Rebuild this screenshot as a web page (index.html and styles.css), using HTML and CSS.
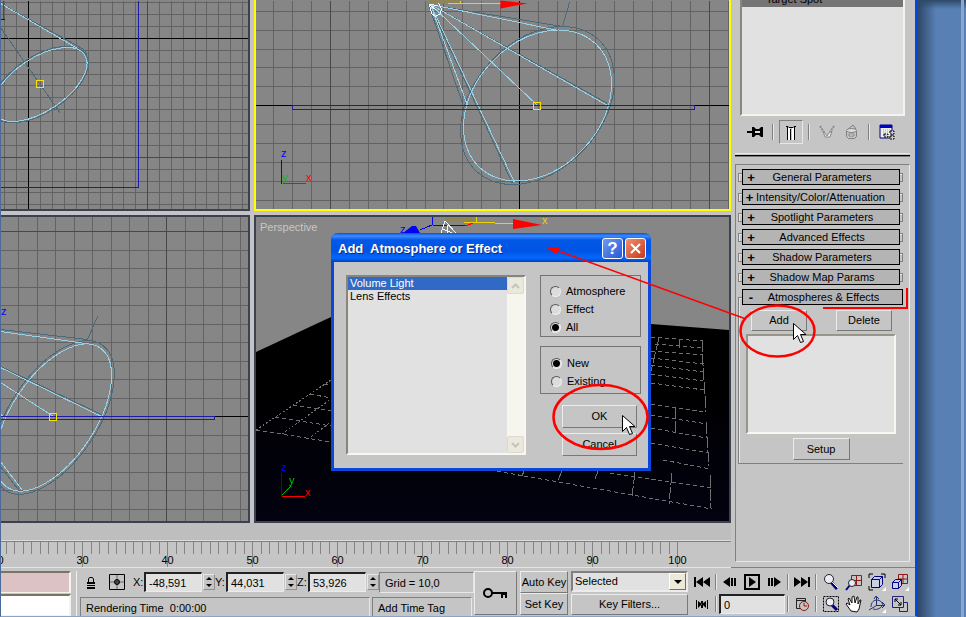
FILE: index.html
```
<!DOCTYPE html>
<html lang="en">
<head>
    <meta charset="UTF-8">
    <meta name="viewport" content="width=device-width, initial-scale=1.0">
    <title>Add Atmosphere or Effect</title>
    <link rel="stylesheet" href="styles.css">
</head>
<body>
<div class="desktop">
    <main class="app">
        <div class="upper">
            <div class="stage">
                <div class="viewports">
                    <!-- Top view -->
                    <div class="viewport first">
                        <svg viewBox="1 0 247 209" preserveAspectRatio="xMinYMin slice">
                            <g transform="translate(.5 .5)" fill="none">
                                <path class="grid" d="M4 0V209M16 0V209M40 0V209M52 0V209M64 0V209M76 0V209M88 0V209M100 0V209M112 0V209M123 0V209M135 0V209M159 0V209M171 0V209M183 0V209M195 0V209M206 0V209M218 0V209M230 0V209M242 0V209M0 2H248M0 14H248M0 26H248M0 50H248M0 62H248M0 74H248M0 85H248M0 97H248M0 109H248M0 121H248M0 133H248M0 145H248M0 169H248M0 181H248M0 192H248M0 204H248"/>
                                <path class="grid-major" d="M147 0V209M0 157H248"/>
                                <path class="axis" d="M28 0V209M0 38H248"/>
                                <path class="plane" d="M138 0V187H0"/>
                                <path class="falloff" d="M0 3L80 47Q86 50 86 56M0 27L60 113"/>
                                <ellipse class="falloff" cx="39.5" cy="84" rx="55" ry="28" transform="rotate(-33.6 39.5 84)"/>
                                <path class="cone" d="M0 3L77 48"/>
                                <ellipse class="cone" cx="39.5" cy="84" rx="53.6" ry="26.5" transform="rotate(-33.6 39.5 84)"/>
                                <path class="target" d="M36 80h7v7h-7z"/>
                                <path class="red-line" d="M3 0V19"/>
                                <path class="blue-line" d="M0 19H4"/>
                            </g>
                        </svg>
                    </div>
                    <!-- Front view -->
                    <div class="viewport active">
                        <svg viewBox="256 0 473 209" preserveAspectRatio="xMinYMin slice">
                            <g transform="translate(.5 .5)" fill="none">
                                <path class="grid" d="M273 0V209M292 0V209M311 0V209M349 0V209M368 0V209M387 0V209M406 0V209M425 0V209M443 0V209M462 0V209M481 0V209M500 0V209M538 0V209M557 0V209M576 0V209M595 0V209M614 0V209M633 0V209M652 0V209M671 0V209M690 0V209M728 0V209M255 11H730M255 30H730M255 49H730M255 67H730M255 86H730M255 124H730M255 143H730M255 162H730M255 181H730M255 200H730"/>
                                <path class="grid-major" d="M330 0V209M709 0V209"/>
                                <path class="axis" d="M519 0V209M255 105H292M694 105H730"/>
                                <path class="falloff" d="M428 4L562 26L569 2M430 4L607 103M428 4L462 103M429 4L512 183"/>
                                <ellipse class="falloff" cx="537" cy="105" rx="89.8" ry="64.1" transform="rotate(-47.3 537 105)"/>
                                <path class="cone" d="M430 4L558 30M430 4L607 105M430 4L467 105M430 4L514 182"/>
                                <path class="cone thin" d="M430 4L537 105"/>
                                <ellipse class="cone" cx="537" cy="105" rx="84.8" ry="63.1" transform="rotate(-47 537 105)"/>
                                <path class="plane" d="M292 105H694V109H292z"/>
                                <path fill="#8f8559" d="M428 -1H460V3H428z"/>
                                <path class="yellow-line" d="M447 3H500M460 0V3"/>
                                <path fill="#f00" d="M500 0L527 3L500 8z"/>
                                <path class="white-line" d="M429 4l8 1-6 1 4 3-6-5 2 9 4 3 5-3 1-5-3-5"/>
                                <path class="target" d="M533 102h7v7h-7z"/>
                                <path class="blue-line" d="M281 159V183"/>
                                <path class="red-line" d="M282 183H305"/>
                            </g>
                            <text x="281" y="157" class="blue">z</text>
                            <text x="282" y="181" class="green">y</text>
                            <text x="306" y="181" class="red">x</text>
                        </svg>
                    </div>
                    <!-- Left view -->
                    <div class="viewport second">
                        <svg viewBox="1 217 247 304" preserveAspectRatio="xMinYMin slice">
                            <g transform="translate(.5 .5)" fill="none">
                                <path class="grid" d="M18 216V521M37 216V521M55 216V521M74 216V521M92 216V521M111 216V521M129 216V521M148 216V521M185 216V521M203 216V521M222 216V521M240 216V521M0 250H248M0 268H248M0 287H248M0 305H248M0 324H248M0 342H248M0 361H248M0 379H248M0 398H248M0 435H248M0 453H248M0 472H248M0 490H248M0 509H248"/>
                                <path class="grid-major" d="M166 216V521M0 231H248"/>
                                <path class="axis" d="M214 416H248"/>
                                <path class="falloff" d="M0 329L87 339L97 316M0 366L103 415M0 466L20 492"/>
                                <ellipse class="falloff" cx="53" cy="417" rx="87.3" ry="44.2" transform="rotate(-56.4 53 417)"/>
                                <path class="cone" d="M0 331L85 343M0 367L101 416M0 461L22 490M0 413l4 5"/>
                                <path class="cone thin" d="M0 382L53 416"/>
                                <ellipse class="cone" cx="53" cy="417" rx="83.7" ry="41.9" transform="rotate(-56.4 53 417)"/>
                                <path class="plane" d="M0 416H214V419H0"/>
                                <path class="target" d="M49 413h7v7h-7z"/>
                            </g>
                            <text x="1" y="315" class="blue">z</text>
                        </svg>
                    </div>
                    <!-- Perspective view -->
                    <div class="viewport third">
                        <svg viewBox="256 217 473 304" preserveAspectRatio="xMinYMin slice">
                            <defs>
                                <linearGradient id="floor" x1="0" y1="0" x2="0" y2="1">
                                    <stop offset=".3" stop-color="#000"/>
                                    <stop offset="1" stop-color="#020210"/>
                                </linearGradient>
                            </defs>
                            <path fill="url(#floor)" d="M256 352L331 317L651 324L729 330V521H256z"/>
                            <g fill="none">
                                <path class="wire-dots" d="M256 430L331 380M282 434L331 399M308 439L331 422"/>
                                <path class="wire" d="M256 430L331 442M275 417L331 426M293 405L331 411M310 394L331 398M324 384L331 385"/>
                                <path class="wire" d="M651 337L702 341M655 344L703 348M651 351L703 355M651 358L704 364M651 365L703 372M651 374L703 381M651 383L704 390M651 404L706 412M651 415L707 424M651 428L707 438M651 443L709 453M663 460L710 469M610 473L711 488M490 470L712 509"/>
                                <path class="wire-long" d="M702 340l1 25 3 47M706 422l3 44M710 475l1 33M659 338l-8 33M679 340v8M675 407v27M672 473l-3 31M635 472l-3 24M598 471l-3 8M562 471l-4 9M524 471l-2 5M491 470h9"/>
                                <path class="blue-line" d="M420 230L432 225V217M432 225L465 226M281 473V496"/>
                                <path fill="#8f8559" d="M445 217H475V222H445z"/>
                                <path class="red-line" d="M465 226L476 222M282 496L305 497"/>
                                <path class="yellow-line" d="M464 222H476V217M476 222L513 224"/>
                                <path class="green-line" d="M282 495L291 486"/>
                                <path fill="#00f" d="M403 233L412 226H416L420 233z"/>
                                <path fill="#f00" d="M513 219L542 225L513 229z"/>
                                <path class="white-line" d="M441 233L445 221L456 233M447 225v8M443 229l9 4"/>
                            </g>
                            <text x="260" y="231" class="caption">Perspective</text>
                            <text x="400" y="233" class="blue">z</text>
                            <text x="542" y="224" class="yellow">x</text>
                            <text x="281" y="471" class="blue">z</text>
                            <text x="289" y="484" class="green">y</text>
                            <text x="305" y="496" class="red">x</text>
                        </svg>
                    </div>
                </div>
                <div class="ruler">
                    <svg class="ticks" aria-hidden="true">
                        <defs>
                            <pattern id="tick" x="81" width="85" height="26" patternUnits="userSpaceOnUse">
                                <path stroke="#848484" d="M.5 0V26M9.5 0V12M17.5 0V12M26.5 0V12M34.5 0V12M43.5 0V12M51.5 0V12M60.5 0V12M68.5 0V12M77.5 0V12"/>
                            </pattern>
                        </defs>
                        <rect width="677" height="26" fill="url(#tick)"/>
                    </svg>
                    <div class="tick-labels">
                        <span>20</span><span>30</span><span>40</span><span>50</span><span>60</span><span>70</span><span>80</span><span>90</span><span>100</span>
                    </div>
                </div>
            </div>

            <aside class="panel">
                <ul class="modifier-list"><li>Target Spot</li></ul>
                <div class="stack-tools">
                    <button aria-label="Pin stack"><svg width="18" height="14"><path d="M1 7H7" stroke="#000" stroke-width="2"/><path d="M6 2h2l2 2h3l2-2h2v10h-2l-2-2h-3l-2 2H6z"/><path d="M9 6h5v2H9z" fill="#ddd"/></svg></button>
                    <i></i>
                    <button class="pressed" aria-label="Show end result"><svg width="12" height="15"><path d="M3 3h2v12H3zM7 3h2v12H7z" fill="#fff"/><path d="M1 1.500h2l1 1h4l1-1h2M2.500 2v13M5.500 4v11M9.500 2v13" fill="none" stroke="#000"/></svg></button>
                    <i></i>
                    <button aria-label="Make unique"><svg width="16" height="15"><path d="M1 1l5 8M15 1l-5 8" stroke="#8a8a8a" stroke-width="2" stroke-dasharray="2 1"/><path d="M4 6l2 6h5l2-6-3 2-2 3-2-3z" fill="#eee" stroke="#8a8a8a"/></svg></button>
                    <button aria-label="Remove modifier"><svg width="13" height="16" fill="none" stroke="#808080"><path d="M2 6L8 1l3 4M1.5 6.5h10v6l-2 2h-6l-2-2z"/><ellipse cx="6.5" cy="6.5" rx="5" ry="2" fill="#ddd"/><path d="M4 10h5v2H4z" fill="#eee"/></svg></button>
                    <i></i>
                    <button aria-label="Configure sets"><svg width="16" height="16"><path d="M1 1h12v13H1z" fill="#eee" stroke="#000080"/><path d="M1 1h12v3H1z" fill="#0000d0"/><path d="M4 6h7M4 8h7M4 10h3" stroke="#aaa" stroke-dasharray="1 1"/><path d="M5 10h4v3H5zM11 7h4v3h-4zM11 12h4v3h-4z" fill="#ccc" stroke="#000" stroke-dasharray="2 1"/></svg></button>
                </div>
                <div class="divider"></div>
                <div class="rollouts">
                    <div class="rollout"><button><b>+</b><span>General Parameters</span></button></div>
                    <div class="rollout"><button><b>+</b><span>Intensity/Color/Attenuation</span></button></div>
                    <div class="rollout"><button><b>+</b><span>Spotlight Parameters</span></button></div>
                    <div class="rollout"><button><b>+</b><span>Advanced Effects</span></button></div>
                    <div class="rollout"><button><b>+</b><span>Shadow Parameters</span></button></div>
                    <div class="rollout"><button><b>+</b><span>Shadow Map Params</span></button></div>
                    <div class="rollout open">
                        <button><b>-</b><span>Atmospheres &amp; Effects</span></button>
                        <div class="rollout-body">
                            <div class="pair">
                                <button class="btn">Add</button>
                                <button class="btn">Delete</button>
                            </div>
                            <div class="effect-list"></div>
                            <button class="btn setup">Setup</button>
                        </div>
                    </div>
                </div>
            </aside>
        </div>

        <footer class="status">
            <div class="listener"><div class="macro"></div><div class="script"></div></div>
            <div class="info">
                <div class="coords">
                    <button class="icon lock" aria-label="Selection lock"><svg width="10" height="13"><path d="M2.5 6V3l1-1.500h3l1 1.500v3" fill="none" stroke="#000"/><path d="M1 6h8v2H1zM1 9h8v1H1zM1 11h8v2H1z"/></svg></button>
                    <button class="icon mode" aria-label="Transform type-in"><svg width="16" height="16" fill="none" stroke="#000"><path d="M.5.5h15v15H.5z"/><path d="M8 1v14M1 8h14" stroke="#666"/><circle cx="8" cy="8" r="2.500" fill="#444"/></svg></button>
                    <label for="x">X:</label><input id="x" type="text" value="-48,591"><span class="spinner"></span>
                    <label for="y">Y:</label><input id="y" type="text" value="44,031"><span class="spinner"></span>
                    <label for="z">Z:</label><input id="z" type="text" value="53,926"><span class="spinner"></span>
                    <div class="field grid-size">Grid = 10,0</div>
                </div>
                <div class="messages">
                    <div class="field prompt">Rendering Time&nbsp; 0:00:00</div>
                    <div class="field tag">Add Time Tag</div>
                </div>
            </div>
            <button class="btn key" aria-label="Set keys"><svg width="26" height="12"><circle cx="5" cy="6" r="4" fill="none" stroke="#000" stroke-width="2"/><path d="M9 5h15v6h-2V8h-2v3h-2V7H9z"/></svg></button>
            <div class="key-modes">
                <button class="btn">Auto Key</button>
                <button class="btn">Set Key</button>
            </div>
            <div class="key-sets">
                <div class="combo"><select aria-label="Key set"><option>Selected</option></select><span></span></div>
                <button class="btn">Key Filters...</button>
            </div>
            <div class="playback">
                <div class="row">
                    <button class="icon" aria-label="Go to start"><svg width="16" height="10"><path d="M0 0h2v10H0zM9 0v10L2 5zM16 0v10L9 5z"/></svg></button><i></i>
                    <button class="icon" aria-label="Previous frame"><svg width="14" height="10"><path d="M7 0v10L0 5zM8 1h2v8H8zM11 1h2v8h-2z"/></svg></button>
                    <button class="icon" aria-label="Play"><svg width="18" height="18"><path d="M2 2h14v14H2z" fill="none" stroke="#000" stroke-width="2"/><path d="M6 4v10l7-5z"/></svg></button>
                    <button class="icon" aria-label="Next frame"><svg width="14" height="10"><path d="M7 0v10l7-5zM1 1h2v8H1zM4 1h2v8H4z"/></svg></button><i></i>
                    <button class="icon" aria-label="Go to end"><svg width="16" height="10"><path d="M14 0h2v10h-2zM0 0v10l7-5zM7 0v10l7-5z"/></svg></button><i></i>
                    <button class="icon nav" aria-label="Zoom"><svg width="18" height="18"><path d="M9 9l6 7" stroke="#000080" stroke-width="3"/><path d="M10 9l6 6" stroke="#fff"/><circle cx="7" cy="6" r="4.500" fill="#ececf4" stroke="#223"/></svg></button>
                    <button class="icon nav" aria-label="Zoom all"><svg width="18" height="18" fill="none"><path d="M6.500 2.500h10v10h-10zM11.500 2v10M6 7.500h10" stroke="#901818"/><path d="M5 12l-4 5" stroke="#000080" stroke-width="2"/><circle cx="7" cy="10" r="3.500" fill="#ececf4" stroke="#223"/></svg></button>
                    <button class="icon nav" aria-label="Zoom extents"><svg width="18" height="18" fill="none"><path d="M1 5V1h4M13 1h4v4M1 13v4h4" stroke="#000"/><path d="M3.500 6.500h8v8h-8zM3.500 6.500l3-3h8v8l-3 3M11.500 6.500l3-3" stroke="#000080" fill="#c8d0e4"/><path d="M18 14v4h-4z" fill="#fff"/></svg></button>
                    <button class="icon nav" aria-label="Zoom extents all"><svg width="18" height="18" fill="none"><path d="M7.500 1.500h9v9h-9zM12 1v9M7 6h9" stroke="#901818"/><path d="M1.500 9.500h6v6h-6zM1.500 9.500l3-3h6v6l-3 3M7.500 9.500l3-3" stroke="#000080" fill="#c8d0e4"/><path d="M18 14v4h-4z" fill="#fff"/></svg></button>
                </div>
                <div class="row">
                    <button class="icon" aria-label="Key mode"><svg width="12" height="9"><path d="M0 0h1v9H0zM11 0h1v9h-1zM6 4L2 1v7zM6 4l4-3v7zM5 1h2v7H5z"/></svg></button><i></i>
                    <input type="text" value="0" aria-label="Current frame"><i></i>
                    <button class="icon" aria-label="Time configuration"><svg width="15" height="15" fill="none"><path d="M6 11.500H1.500v-10h9V5M1 3.500h10" stroke="#222"/><circle cx="9" cy="9" r="4.500" stroke="#901818"/><path d="M9 6v3h3" stroke="#901818"/></svg></button><i></i>
                    <button class="icon nav" aria-label="Region zoom"><svg width="18" height="18" fill="none"><path d="M1.500 1.500h15v15h-15z" stroke="#000" stroke-dasharray="2 1"/><path d="M10 10l5 5" stroke="#000080" stroke-width="3"/><circle cx="8" cy="7" r="4" fill="#ececf4" stroke="#223"/></svg></button>
                    <button class="icon nav" aria-label="Pan"><svg width="18" height="18"><path d="M6 16L1 9l1-1 3 2L3 4l1-1 3 5V2l2-1 1 7 2-6h1v7l2-4h1l-2 9-2 3z" fill="#fff" stroke="#111"/></svg></button>
                    <button class="icon nav" aria-label="Arc rotate"><svg width="18" height="18" fill="none" stroke="#223070"><path d="M8.500 1v10M8.500 10.500L1 15M8 10.500h8M3 12C3 7 6 5 9 5s5 2 6 5M5 14c3 1 7 0 9-3M8 1L6 4M8 1l3 3M17 10l-3-3M17 10l-3 3"/><path d="M18 14v4h-4z" fill="#fff" stroke="none"/></svg></button>
                    <button class="icon nav" aria-label="Maximize viewport"><svg width="18" height="18" fill="none"><path d="M1.500 1.500h11v11h-11zM13 7.500h3.500v9h-8V13" stroke="#202080"/><path d="M4 4l6 6M4 7V4h3M10 7v3H7" stroke="#000"/></svg></button>
                </div>
            </div>
        </footer>

        <section class="dialog" role="dialog" aria-labelledby="dialog-title">
            <header>
                <h1 id="dialog-title">Add  Atmosphere or Effect</h1>
                <button class="help" aria-label="Help">?</button>
                <button class="close" aria-label="Close"><svg width="13" height="13"><path d="M2 2l9 9M11 2l-9 9" stroke="#fff" stroke-width="2"/></svg></button>
            </header>
            <div class="dialog-body">
                <div class="list">
                    <ul role="listbox">
                        <li class="selected" role="option" aria-selected="true">Volume Light</li>
                        <li role="option">Lens Effects</li>
                    </ul>
                    <div class="scrollbar">
                        <button aria-label="Scroll up"><svg width="9" height="6"><path d="M1 5l3.500-3.500L8 5" fill="none" stroke="#c4c4b8" stroke-width="2"/></svg></button>
                        <button aria-label="Scroll down"><svg width="9" height="6"><path d="M1 1l3.500 3.500L8 1" fill="none" stroke="#c4c4b8" stroke-width="2"/></svg></button>
                    </div>
                </div>
                <form class="options">
                    <fieldset class="kind">
                        <label><input type="radio" name="type">Atmosphere</label>
                        <label><input type="radio" name="type">Effect</label>
                        <label><input type="radio" name="type" checked>All</label>
                    </fieldset>
                    <fieldset class="source">
                        <label><input type="radio" name="source" checked>New</label>
                        <label><input type="radio" name="source">Existing</label>
                    </fieldset>
                    <button class="btn" type="button">OK</button>
                    <button class="btn" type="button">Cancel</button>
                </form>
            </div>
        </section>

        <!-- Red marks and mouse pointers over the window -->
        <svg class="notes" width="918" height="480" aria-hidden="true">
            <defs>
                <path id="pointer" d="M.5.5v16l4-4 3 7 3-1-3-7h5.500z" fill="#fff" stroke="#000"/>
            </defs>
            <g fill="none" stroke="#f00">
                <ellipse cx="777.500" cy="331" rx="37" ry="25.500" stroke-width="2.500"/>
                <ellipse cx="600.500" cy="417" rx="47" ry="32" stroke-width="2.500"/>
                <path d="M746 319L553 249" stroke-width="1.500"/>
                <path d="M823 308H907V288" stroke-width="2"/>
            </g>
            <path d="M547 248L560 248L556 254z" fill="#f00"/>
            <use href="#pointer" x="793" y="323"/>
            <use href="#pointer" x="622" y="415"/>
        </svg>
    </main>
    <div class="wallpaper"></div>
</div>
</body>
</html>
```
FILE: styles.css
```
* {
    box-sizing: border-box;
}
body {
    margin: 0;
    font: 11px/13px "Liberation Sans", Arial, sans-serif;
    color: #000;
}
button, input, select {
    font: inherit;
    color: inherit;
    margin: 0;
    padding: 0;
    border: 0;
    border-radius: 0;
    background: none;
}
ul {
    list-style: none;
    margin: 0;
    padding: 0;
}
svg {
    display: block;
    flex: none;
}
.desktop {
    display: flex;
    min-height: 100vh;
}
.wallpaper {
    width: 48px;
    background:
        linear-gradient(90deg, transparent 43px, #8ea6cc 43px, #8ea6cc 46px, transparent 46px),
        linear-gradient(#2f4868, transparent 9px),
        linear-gradient(90deg, #2f4868, #5880b4 18px);
}
.app {
    position: relative;
    flex: 1;
    min-width: 0;
    display: flex;
    flex-direction: column;
    background: #c5c5c5;
    border-left: 1px solid #4a6a9a;
    border-right: 3px solid #0048e0;
    border-bottom: 1px solid #8aa4c8;
}
.upper {
    flex: 1;
    display: flex;
    min-height: 0;
}
.stage {
    flex: 1;
    min-width: 0;
    display: flex;
    flex-direction: column;
    background: #bebebe;
}

/* Viewports */
.viewports {
    flex: 1;
    display: grid;
    grid-template-columns: minmax(0, 249fr) minmax(0, 477fr);
    grid-template-rows: minmax(0, 211fr) minmax(0, 308fr);
    gap: 4px;
    background: #c5c3c5;
}
.viewport {
    background: #868686;
    border: 2px solid #3a4250;
    overflow: hidden;
}
.viewport svg {
    width: 100%;
    height: 100%;
}
.viewport text {
    font-size: 11px;
}
.first {
    border-width: 0 2px 2px 0;
}
.second {
    border-left: 0;
}
.active {
    border: 2px solid #ff0;
    border-top: 0;
}
.grid, .grid-major, .axis, .plane, .target, .falloff, .cone,
.blue-line, .red-line, .yellow-line, .green-line, .white-line,
.wire, .wire-dots, .wire-long {
    shape-rendering: crispEdges;
}
.grid { stroke: #636363; }
.grid-major { stroke: #484848; }
.axis { stroke: #000; }
.plane { stroke: #1c1ca8; }
.target { stroke: #ffe000; }
.falloff { stroke: #4c6a78; }
.cone { stroke: #98d0e8; }
.blue-line { stroke: #00f; }
.red-line { stroke: #f00; }
.yellow-line { stroke: #f0d000; }
.green-line { stroke: #00c000; }
.white-line { stroke: #e8f8ff; }
.wire { stroke: #707070; stroke-dasharray: 4 3; }
.wire-dots { stroke: #707070; stroke-dasharray: 2 2; }
.wire-long { stroke: #707070; stroke-dasharray: 12 2; }
.blue { fill: #00f; }
.red { fill: #f00; }
.green { fill: #00c000; }
.yellow { fill: #f0d000; }
.caption { fill: #c8c8c8; }

/* Time ruler */
.ruler {
    height: 27px;
    margin-top: 18px;
    border-top: 1px solid #808080;
    border-bottom: 1px solid #e4e4e4;
    background: #c5c5c5;
    overflow: hidden;
    box-shadow: 0 -1px #dcdcdc;
}
.ticks {
    width: 100%;
    height: 26px;
}
.tick-labels {
    display: flex;
    margin: -14px 0 0 -46px;
}
.tick-labels span {
    flex: none;
    width: 85px;
    text-align: center;
}

/* Command panel */
.panel {
    width: 184px;
    display: flex;
    flex-direction: column;
    padding: 0 5px 5px 4px;
    border-bottom: 1px solid #808080;
}
.modifier-list {
    height: 116px;
    margin: 0 5px;
    background: #e1e1e1;
    border: 2px solid #f4f4ec;
    border-top: 0;
    border-left-color: #88867a;
    overflow: hidden;
}
.modifier-list li {
    height: 14px;
    margin-top: -7px;
    padding-left: 24px;
    background: #757575;
}
.stack-tools {
    display: flex;
    align-items: center;
    height: 24px;
    margin: 4px 0 0 8px;
}
.stack-tools button {
    flex: none;
    width: 24px;
    height: 24px;
    display: flex;
    align-items: center;
    justify-content: center;
}
.stack-tools .pressed {
    border: 1px solid #e8e8e8;
    border-top-color: #808080;
    border-left-color: #808080;
}
.stack-tools i, .playback i {
    flex: none;
    width: 2px;
    height: 16px;
    border-left: 1px solid #808080;
    border-right: 1px solid #e8e8e8;
}
.stack-tools i {
    margin: 0 5px;
}
.divider {
    height: 4px;
    margin-top: 9px;
    border-top: 1px solid #e8e8e8;
    border-bottom: 1px solid #777;
    background: #000;
    background-clip: content-box;
    padding-top: 1px;
}
.rollouts {
    flex: 1;
    margin-top: 7px;
    padding: 4px 6px 0 2px;
    border: 1px solid #e8e8e8;
    border-top-color: #808080;
    border-left-color: #808080;
}
.rollout {
    position: relative;
    padding: 0 3px 0 4px;
    margin-bottom: 4px;
}
.rollout::before {
    content: "";
    position: absolute;
    inset: 4px 0 3px;
    border: 1px solid #808080;
    box-shadow: inset 1px 1px #e8e8e8;
}
.rollout > button {
    position: relative;
    width: 100%;
    height: 16px;
    display: flex;
    align-items: center;
    border: 1px solid #000;
    background: #b4b4b4;
}
.rollout > button b {
    width: 16px;
    font-size: 13px;
}
.rollout > button span {
    flex: 1;
    margin-right: 14px;
    text-align: center;
    white-space: nowrap;
}
.open {
    padding-right: 0;
}
.open::before {
    inset: 8px 0 0;
    border-width: 1px 0 1px 1px;
}
.open .rollout-body {
    position: relative;
    display: flex;
    flex-direction: column;
    align-items: center;
    padding: 5px 7px 4px 4px;
}
.pair {
    display: flex;
    justify-content: space-between;
    width: 100%;
    padding: 0 4px 0 5px;
}
.pair .btn {
    width: 56px;
    height: 21px;
}
.effect-list {
    width: 100%;
    height: 100px;
    margin: 3px 0 4px;
    background: #e1e1e1;
    border: 2px solid #f8f8f0;
    border-top-color: #98968a;
    border-left-color: #98968a;
}
.setup {
    width: 57px;
    height: 22px;
}
.btn {
    display: block;
    border: 1px solid #787878;
    border-top-color: #ececec;
    border-left-color: #ececec;
    background: #c5c5c5;
    text-align: center;
}

/* Status bar */
.status {
    display: flex;
    height: 48px;
    padding-top: 3px;
}
.listener {
    width: 76px;
    padding-right: 5px;
    border-right: 1px solid #f0f0f0;
}
.listener div {
    height: 22px;
    margin-bottom: 1px;
    border: 1px solid #f4f4ec;
    border-width: 2px 2px 1px 0;
    border-top-color: #787468;
}
.macro {
    background: #dcc2c4;
}
.script {
    background: #fff;
}
.info {
    width: 394px;
    margin-left: 3px;
    display: flex;
    flex-direction: column;
    justify-content: space-between;
}
.coords {
    display: flex;
    height: 22px;
    align-items: center;
}
.icon {
    flex: none;
    width: 22px;
    height: 22px;
    display: flex;
    align-items: center;
    justify-content: center;
}
.coords .lock {
    width: 21px;
}
.coords .mode {
    width: 32px;
}
.coords label {
    width: 11px;
}
.status input {
    width: 58px;
    height: 20px;
    padding-left: 3px;
    border: 1px solid #ececec;
    border-top: 2px solid #222;
    border-left: 2px solid #222;
    background: #e1e1e1;
}
.spinner {
    flex: none;
    display: flex;
    flex-direction: column;
    justify-content: space-between;
    align-items: center;
    width: 12px;
    height: 16px;
    margin-left: 1px;
    padding: 2px 0;
    border: 1px solid #909090;
    border-top-color: #e8e8e8;
    border-left-color: #e8e8e8;
}
.spinner::before, .spinner::after {
    content: "";
    border: 3px solid transparent;
    border-top-width: 0;
    border-bottom-color: #000;
}
.spinner::after {
    border-width: 3px 3px 0;
    border-top-color: #000;
}
.field {
    border: 1px solid #e8e8e8;
    border-top-color: #808080;
    border-left-color: #808080;
    white-space: nowrap;
}
.grid-size {
    flex: 1;
    height: 21px;
    padding: 4px 5px;
}
.messages {
    display: flex;
    gap: 2px;
    padding-right: 2px;
}
.messages .field {
    height: 19px;
    padding: 4px 5px 0;
    border-bottom: 0;
}
.prompt {
    flex: 1;
}
.tag {
    width: 100px;
}
.key {
    width: 43px;
    height: 44px;
    display: flex;
    align-items: center;
    justify-content: center;
}
.key-modes {
    width: 48px;
    margin-left: 3px;
}
.key-modes .btn {
    width: 100%;
    height: 22px;
    white-space: nowrap;
}
.key-sets {
    width: 117px;
    margin-left: 3px;
}
.key-sets .btn {
    width: 100%;
    height: 21px;
    margin-top: 2px;
}
.combo {
    display: flex;
    height: 21px;
    border: 2px solid #ececec;
    border-top-color: #808080;
    border-left-color: #808080;
    background: #e1e1e1;
}
.combo select {
    flex: 1;
    min-width: 0;
    appearance: none;
    padding-left: 2px;
}
.combo span {
    width: 17px;
    background: #ece9d8;
    border: 1px solid #716f64;
    border-top-color: #fff;
    border-left-color: #fff;
    display: flex;
    align-items: center;
    justify-content: center;
}
.combo span::after {
    content: "";
    border: 4px solid transparent;
    border-top-color: #000;
    border-bottom: 0;
}
.playback {
    margin-left: 3px;
}
.playback .row {
    display: flex;
    align-items: center;
    height: 22px;
}
.playback i {
    margin: 0 2px;
}
.playback input {
    width: 66px;
}
.playback .nav {
    width: 23px;
}

/* Dialog */
.dialog {
    position: absolute;
    left: 330px;
    top: 233px;
    width: 320px;
    border: 3px solid #0a48dc;
    border-top: 0;
    border-radius: 7px 7px 0 0;
    background: #c5c5c5;
}
.dialog header {
    display: flex;
    align-items: center;
    gap: 2px;
    height: 29px;
    margin: 0 -3px;
    padding: 2px 5px 0 7px;
    border-radius: 7px 7px 0 0;
    background: linear-gradient(#0a50d8, #3c8cff 3px, #0458e8 7px, #0054e4 18px, #0468fc 25px, #0040c0);
}
.dialog h1 {
    flex: 1;
    margin: 0;
    font-size: 13px;
    line-height: 16px;
    color: #fff;
    text-shadow: 1px 1px #0a2a80;
    white-space: pre;
}
.dialog header button {
    display: flex;
    align-items: center;
    justify-content: center;
    width: 21px;
    height: 21px;
    border: 1px solid #fff;
    border-radius: 3px;
    color: #fff;
}
.help {
    background: linear-gradient(135deg, #7098f0, #2858d8);
}
.dialog .help {
    font-size: 17px;
    font-weight: bold;
}
.close {
    background: linear-gradient(135deg, #f09070, #c83818);
}
.dialog-body {
    display: flex;
    justify-content: space-between;
    align-items: flex-start;
    padding: 13px 7px 12px 12px;
}
.list {
    display: flex;
    width: 180px;
    height: 180px;
    border: 2px solid #f8f8f0;
    border-top-color: #88867a;
    border-left-color: #88867a;
    background: #e1e1e1;
}
.list ul {
    flex: 1;
}
.list li {
    padding-left: 2px;
}
.list .selected {
    background: #316ac5;
    color: #fff;
}
.scrollbar {
    display: flex;
    flex-direction: column;
    justify-content: space-between;
    width: 17px;
    background: #f6f5ee;
}
.scrollbar button {
    display: flex;
    align-items: center;
    justify-content: center;
    height: 17px;
    border: 1px solid #dcdad0;
    border-radius: 2px;
    background: #ebe9de;
}
.options {
    display: flex;
    flex-direction: column;
    align-items: flex-end;
    width: 101px;
}
.options fieldset {
    width: 100%;
    margin: 0;
    border: 1px solid #747474;
}
.options .kind {
    padding: 6px 0 0 9px;
    margin-bottom: 9px;
}
.options .source {
    padding: 7px 0 3px 10px;
    margin-bottom: 11px;
}
.options label {
    display: flex;
    align-items: center;
    gap: 5px;
    height: 18px;
}
.options input {
    appearance: none;
    width: 11px;
    height: 11px;
    border: 1px solid #eee;
    border-top-color: #555;
    border-left-color: #555;
    border-radius: 50%;
    background: #dcdcdc;
}
.options input:checked {
    background: radial-gradient(#000 3px, #dcdcdc 4px);
}
.options .btn {
    width: 75px;
    height: 23px;
    margin-right: 4px;
}
.options .btn + .btn {
    margin-top: 5px;
}
.notes {
    position: absolute;
    left: -1px;
    top: 0;
    pointer-events: none;
}
```
